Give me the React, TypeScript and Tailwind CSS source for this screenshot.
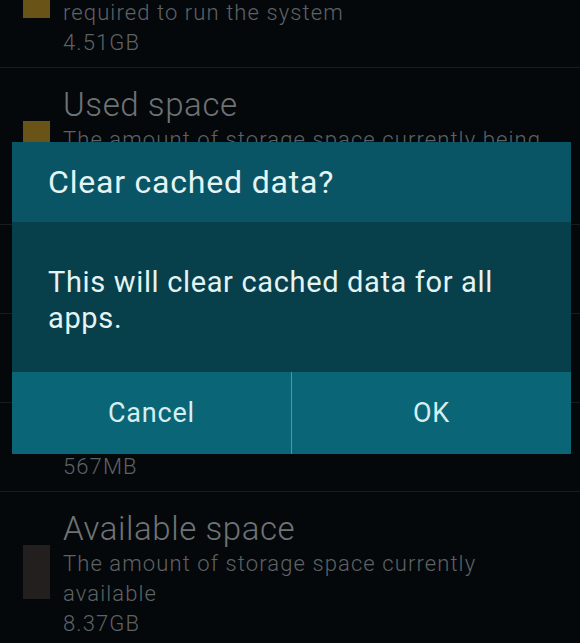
import React from 'react';

type Row = {
  title: string;
  lines?: string[];
  value: string;
  swatch?: string;
  sub?: boolean;
};

const rows: Row[] = [
  {
    title: 'System memory',
    lines: ['The minimum amount of storage space', 'required to run the system'],
    value: '4.51GB',
    swatch: 'bg-[#6a5317]',
  },
  {
    title: 'Used space',
    lines: ['The amount of storage space currently being', 'used'],
    value: '6.12GB',
    swatch: 'bg-[#6a5317]',
  },
  { title: 'Applications', value: '3.85GB', sub: true },
  { title: 'Pictures, videos', value: '1.70GB', sub: true },
  { title: 'Cached data', value: '567MB', sub: true },
  {
    title: 'Available space',
    lines: ['The amount of storage space currently', 'available'],
    value: '8.37GB',
    swatch: 'bg-[#221f1e]',
  },
];

function StorageRow({ row }: { row: Row }) {
  return (
    <div
      className={
        row.sub
          ? 'flex border-b border-[#181c20] pt-[9px] pb-[9px]'
          : 'flex border-b border-[#181c20] pt-[17px] pb-[9px]'
      }
    >
      <div className="w-[63px] shrink-0 pl-[23px]">
        {row.swatch && <div className={'mt-[36px] h-[54px] w-[27px] ' + row.swatch} />}
      </div>
      <div className="min-w-0 flex-1 whitespace-nowrap">
        <div className="text-[33px] leading-[40px] font-light tracking-[0.6px] text-[#707375]">
          {row.title}
        </div>
        {row.lines && (
          <div className="text-[22px] leading-[30px] font-light tracking-[1.1px] text-[#5f6265]">
            {row.lines.map((l) => (
              <div key={l}>{l}</div>
            ))}
          </div>
        )}
        <div className="text-[22px] leading-[30px] font-light tracking-[1.1px] text-[#5f6265]">
          {row.value}
        </div>
      </div>
    </div>
  );
}

export default function App() {
  return (
    <div
      className="relative h-[643px] w-[580px] overflow-hidden bg-[#04080b]"
      style={{ fontFamily: 'Roboto, "Noto Sans", sans-serif' }}
    >
      {/* 背景のストレージ一覧 */}
      <div className="-mt-[89px]">
        {rows.map((r) => (
          <StorageRow key={r.title} row={r} />
        ))}
      </div>

      {/* ダイアログ */}
      <div className="absolute left-[12px] top-[142px] w-[559px]">
        <div className="flex h-[80px] items-center bg-[#0a5565] pl-[36px] text-[32px] tracking-[0.8px] text-[#e4f3f4]">
          Clear cached data?
        </div>
        <div className="h-[150px] bg-[#073f4a] px-[36px] pt-[42px] text-[29px] leading-[36px] tracking-[0.65px] text-[#e4f3f4]">
          This will clear cached data for all apps.
        </div>
        <div className="flex h-[82px] bg-[#0a6677] text-[27px] tracking-[0.8px] text-[#d6eef1]">
          <div className="flex flex-1 items-center justify-center border-r border-[#4b98a5]">Cancel</div>
          <div className="flex flex-1 items-center justify-center">OK</div>
        </div>
      </div>
    </div>
  );
}
